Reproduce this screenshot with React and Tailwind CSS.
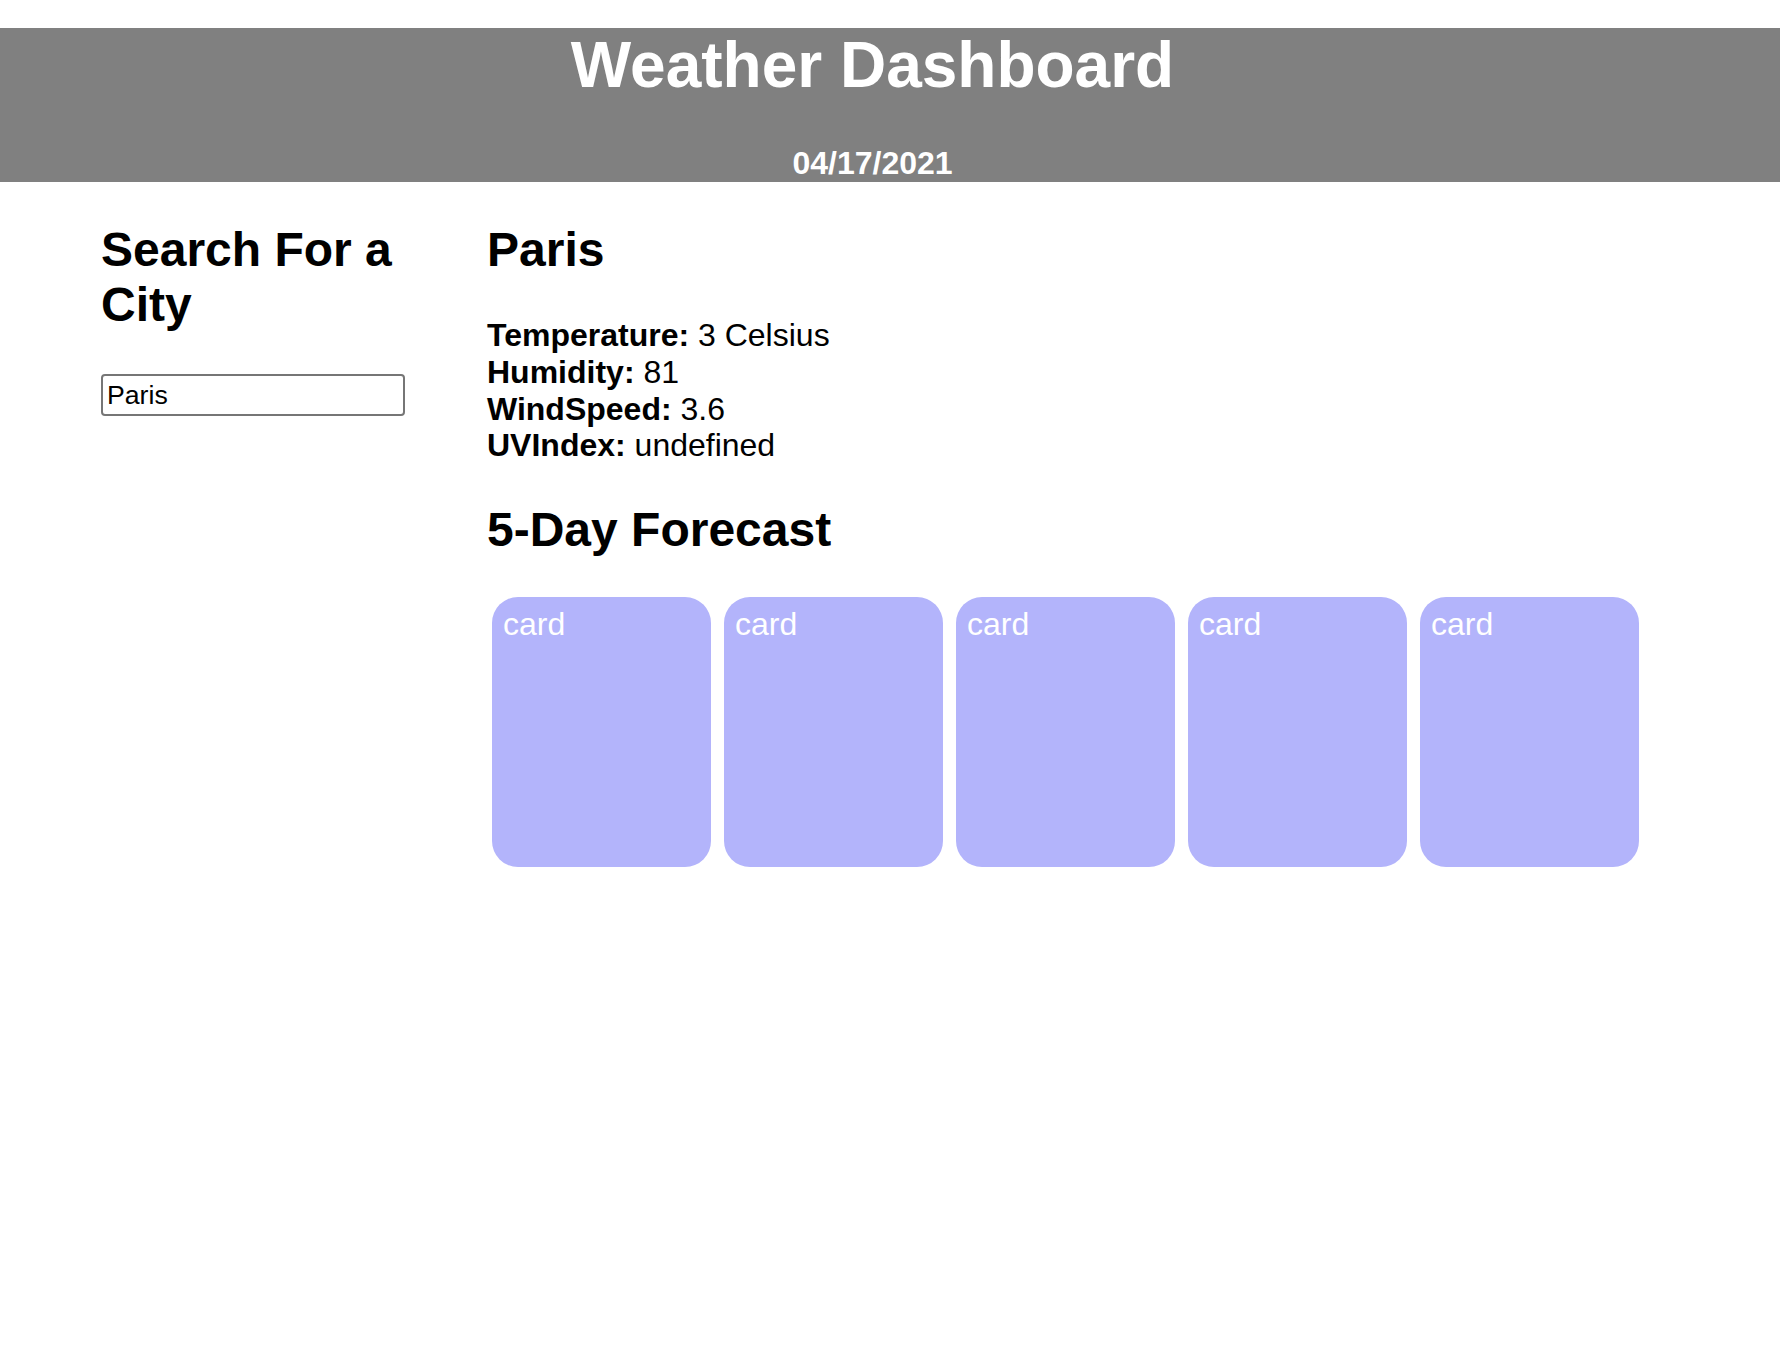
import React from "react";

const STATS = [
  ["Temperature:", "3 Celsius"],
  ["Humidity:", "81"],
  ["WindSpeed:", "3.6"],
  ["UVIndex:", "undefined"],
];

export default function App() {
  return (
    <div className="min-h-screen bg-white font-['Liberation_Sans',Arial,Helvetica,sans-serif] text-black">
      {/* Kopfzeile */}
      <header className="mt-[28px] bg-[#808080] pr-[35px] text-center text-white">
        <h1 className="text-[64px] font-bold leading-[74px]">Weather Dashboard</h1>
        <p className="mt-[43px] text-[32px] font-bold leading-[37px]">04/17/2021</p>
      </header>

      <main className="flex pl-[101px] pt-[40px]">
        {/* Suche */}
        <aside className="w-[386px] shrink-0 pr-[40px]">
          <h2 className="text-[48px] font-bold leading-[55px]">Search For a City</h2>
          <input
            defaultValue="Paris"
            className="mt-[42px] block h-[42px] w-[304px] rounded-[4px] border-2 border-[#767676] px-[4px] py-[2px] text-[26.67px] text-black outline-none"
          />
        </aside>

        {/* Aktuelles Wetter */}
        <section>
          <h2 className="text-[48px] font-bold leading-[55px]">Paris</h2>
          <div className="mt-[40px] text-[32px] leading-[36.8px]">
            {STATS.map(([k, v]) => (
              <div key={k}>
                <span className="font-bold">{k}</span> {v}
              </div>
            ))}
          </div>

          <h2 className="mt-[38px] text-[48px] font-bold leading-[55px]">5-Day Forecast</h2>
          <div className="ml-[5px] mt-[40px] flex gap-[13px]">
            {[0, 1, 2, 3, 4].map((i) => (
              <div
                key={i}
                className="h-[270px] w-[219px] rounded-[26px] bg-[#b3b4fb] px-[11px] pt-[9px] text-[32px] leading-[37px] text-white"
              >
                card
              </div>
            ))}
          </div>
        </section>
      </main>
    </div>
  );
}
